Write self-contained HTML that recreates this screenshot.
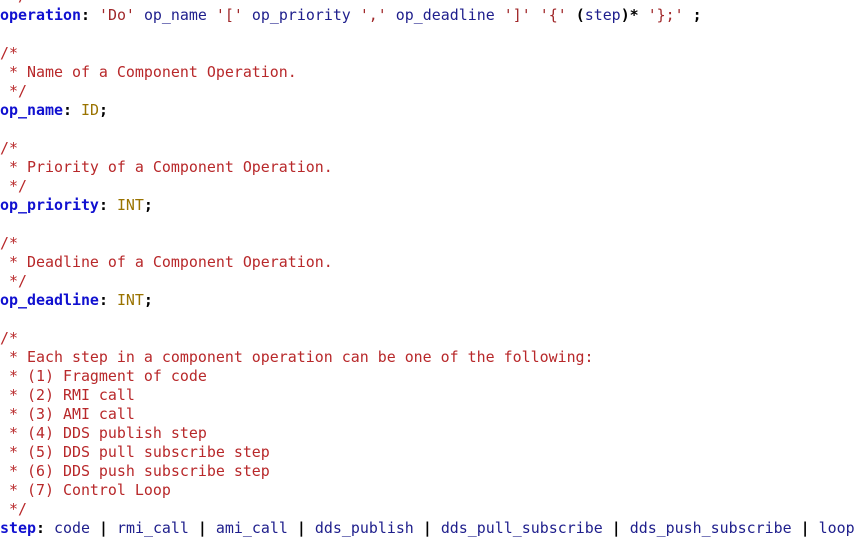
<!DOCTYPE html>
<html><head><meta charset="utf-8"><style>
html,body{margin:0;padding:0;background:#fff;width:858px;height:544px;overflow:hidden}
pre{margin:0;position:absolute;left:0;top:-13px;font-family:"DejaVu Sans Mono","Liberation Mono",monospace;font-size:14.95px;line-height:19px;color:#000}
.k{color:#1010d0;font-weight:bold}
.n{color:#1e1e8c}
.s{color:#a0282a}
.c{color:#b8282a}
.t{color:#9a7300}
.p{font-weight:bold;color:#000}
</style></head><body><pre><span class="c"> */</span>
<span class="k">operation</span><span class="p">:</span> <span class="s">'Do'</span> <span class="n">op_name</span> <span class="s">'['</span> <span class="n">op_priority</span> <span class="s">','</span> <span class="n">op_deadline</span> <span class="s">']'</span> <span class="s">'{'</span> <span class="p">(</span><span class="n">step</span><span class="p">)*</span> <span class="s">'};'</span> <span class="p">;</span>

<span class="c">/*
 * Name of a Component Operation.
 */</span>
<span class="k">op_name</span><span class="p">:</span> <span class="t">ID</span><span class="p">;</span>

<span class="c">/*
 * Priority of a Component Operation.
 */</span>
<span class="k">op_priority</span><span class="p">:</span> <span class="t">INT</span><span class="p">;</span>

<span class="c">/*
 * Deadline of a Component Operation.
 */</span>
<span class="k">op_deadline</span><span class="p">:</span> <span class="t">INT</span><span class="p">;</span>

<span class="c">/*
 * Each step in a component operation can be one of the following:
 * (1) Fragment of code
 * (2) RMI call
 * (3) AMI call
 * (4) DDS publish step
 * (5) DDS pull subscribe step
 * (6) DDS push subscribe step
 * (7) Control Loop
 */</span>
<span class="k">step</span><span class="p">:</span> <span class="n">code</span> <span class="p">|</span> <span class="n">rmi_call</span> <span class="p">|</span> <span class="n">ami_call</span> <span class="p">|</span> <span class="n">dds_publish</span> <span class="p">|</span> <span class="n">dds_pull_subscribe</span> <span class="p">|</span> <span class="n">dds_push_subscribe</span> <span class="p">|</span> <span class="n">loop</span></pre></body></html>
